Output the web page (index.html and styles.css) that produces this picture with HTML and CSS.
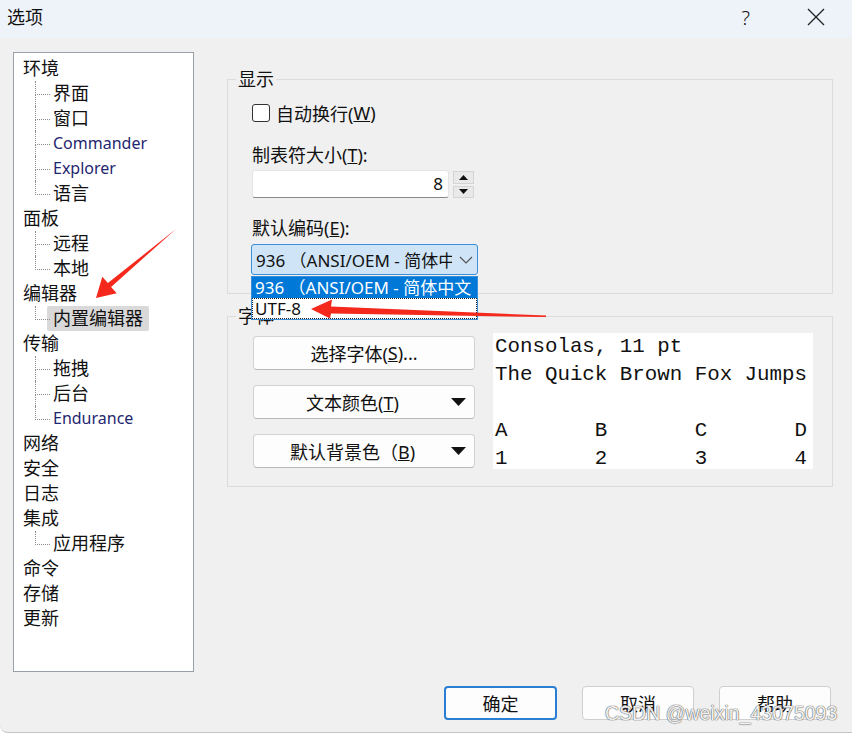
FILE: index.html
```html
<!DOCTYPE html>
<html>
<head>
  <meta charset="UTF-8">
  <title>选项</title>
  <link rel="stylesheet" href="styles.css">
</head>
<body>
<div class="window">
  <div class="titlebar">
    <span class="title">选项</span>
    <span class="help">?</span>
    <svg class="close" width="18" height="18" viewBox="0 0 18 18"><path d="M1 1L17 17M17 1L1 17" stroke="#222" stroke-width="1.3" fill="none"/></svg>
  </div>

  <div class="main">
    <div class="tree">
      <div class="node">环境</div>
      <div class="kids">
        <div class="kid">界面</div>
        <div class="kid">窗口</div>
        <div class="kid lat">Commander</div>
        <div class="kid lat">Explorer</div>
        <div class="kid">语言</div>
      </div>
      <div class="node">面板</div>
      <div class="kids">
        <div class="kid">远程</div>
        <div class="kid">本地</div>
      </div>
      <div class="node">编辑器</div>
      <div class="kids">
        <div class="kid"><span class="selected">内置编辑器</span></div>
      </div>
      <div class="node">传输</div>
      <div class="kids">
        <div class="kid">拖拽</div>
        <div class="kid">后台</div>
        <div class="kid lat">Endurance</div>
      </div>
      <div class="node">网络</div>
      <div class="node">安全</div>
      <div class="node">日志</div>
      <div class="node">集成</div>
      <div class="kids">
        <div class="kid">应用程序</div>
      </div>
      <div class="node">命令</div>
      <div class="node">存储</div>
      <div class="node">更新</div>
    </div>

    <div class="panel">
      <fieldset class="group display">
        <legend>显示</legend>
        <div class="check"><span class="box"></span>自动换行(<u>W</u>)</div>
        <div class="field-label tab-label">制表符大小(<u>T</u>):</div>
        <div class="spin">
          <div class="spin-input">8</div>
          <div class="spin-btns">
            <span class="spin-btn"><svg width="9" height="5" viewBox="0 0 9 5"><path d="M0 5L4.5 0L9 5Z" fill="#111"/></svg></span>
            <span class="spin-btn"><svg width="9" height="5" viewBox="0 0 9 5"><path d="M0 0L4.5 5L9 0Z" fill="#111"/></svg></span>
          </div>
        </div>
        <div class="field-label enc-label">默认编码(<u>E</u>):</div>
        <div class="combo-wrap">
          <div class="combo">
            <span class="combo-text">936 （ANSI/OEM - 简体中文）</span>
            <svg class="chev" width="14" height="8" viewBox="0 0 14 8"><path d="M1 1L7 7L13 1" stroke="#555" stroke-width="1.2" fill="none"/></svg>
          </div>
          <div class="combo-list">
            <div class="opt sel">936 （ANSI/OEM - 简体中文</div>
            <div class="opt focus">UTF-8</div>
          </div>
        </div>
      </fieldset>

      <fieldset class="group font">
        <legend>字体</legend>
        <div class="font-row">
          <div class="font-btns">
            <div class="btn">选择字体(<u>S</u>)...</div>
            <div class="btn drop"><span class="btn-label">文本颜色(<u>T</u>)</span><svg width="15" height="8" viewBox="0 0 15 8"><path d="M0 0L7.5 8L15 0Z" fill="#111"/></svg></div>
            <div class="btn drop"><span class="btn-label">默认背景色（<u>B</u>)</span><svg width="15" height="8" viewBox="0 0 15 8"><path d="M0 0L7.5 8L15 0Z" fill="#111"/></svg></div>
          </div>
<pre class="preview">Consolas, 11 pt
The Quick Brown Fox Jumps

A       B       C       D
1       2       3       4</pre>
        </div>
      </fieldset>
    </div>
  </div>

  <div class="footer">
    <div class="dlg-btn default">确定</div>
    <div class="dlg-btn">取消</div>
    <div class="dlg-btn">帮助</div>
  </div>

  <div class="watermark">CSDN @weixin_43075093</div>

  <svg class="arrows" width="852" height="734" viewBox="0 0 852 734">
    <path d="M176 229 L111.1 286.9 L116.7 293.3 L96 298 L102.3 276.7 L107.9 283.1 Z" fill="#f5281c"/>
    <path d="M546 315.5 L546 317 L331 313.5 L330 318.5 L311 309 L332 299.5 L331 306.5 Z" fill="#f5281c"/>
  </svg>
</div>
</body>
</html>
```

FILE: styles.css
```css
html, body {
  margin: 0;
  background: #fff;
}

.window {
  position: relative;
  width: 852px;
  height: 732px;
  background: #f0f0f0;
  border-bottom: 1px solid #c4c4c4;
  border-bottom-left-radius: 8px;
  font-family: "Noto Sans", "Noto Sans CJK SC", sans-serif;
  font-size: 18px;
  color: #111;
  overflow: hidden;
}

.titlebar {
  height: 38px;
  background: #eef3fa;
  display: flex;
  align-items: center;
  padding: 0 0 0 7px;
}
.title {
  flex: 1;
  line-height: 24px;
  margin-top: -4px;
}
.help {
  font-size: 20px;
  font-weight: 300;
  margin-right: 57px;
  margin-top: -4px;
}
.close {
  margin-right: 27px;
  margin-top: -4px;
}

.main {
  display: flex;
  padding: 14px 0 0 13px;
  gap: 33px;
}

/* left tree */
.tree {
  width: 170px;
  height: 615px;
  background: #fff;
  border: 1px solid #9aa0a8;
  padding: 3px 0 0 9px;
  line-height: 25px;
}
.node {
  height: 25px;
}
.kids {
  margin-left: 12px;
}
.kid {
  position: relative;
  height: 25px;
  padding-left: 18px;
}
.kid::before {
  content: '';
  position: absolute;
  left: 0;
  top: 0;
  width: 14px;
  height: 13px;
  border-left: 1px dotted #8c8c8c;
  border-bottom: 1px dotted #8c8c8c;
}
.kid:not(:last-child)::after {
  content: '';
  position: absolute;
  left: 0;
  top: 13px;
  bottom: 0;
  border-left: 1px dotted #8c8c8c;
}
.kid.lat {
  font-size: 16px;
  color: #1f2670;
}
.selected {
  background: #d9d9d9;
  margin-left: -6px;
  padding: 0 6px;
  display: inline-block;
  border-radius: 2px;
}

/* right side */
.panel {
  width: 606px;
  margin-top: 17px;
}
.group {
  margin: 0;
  padding: 0 0 0 24px;
  border: 1px solid #dcdcdc;
  min-width: 0;
}
.group legend {
  margin-left: -16px;
  padding: 0 2px;
  line-height: 20px;
}
.display {
  padding-bottom: 18px;
}
.check {
  display: flex;
  align-items: center;
  height: 24px;
  margin-top: 12px;
}
.box {
  width: 16px;
  height: 16px;
  border: 1px solid #333;
  border-radius: 3px;
  background: #fff;
  margin-right: 6px;
}
.field-label {
  line-height: 24px;
  height: 24px;
}
.tab-label {
  margin-top: 18px;
}
.spin {
  display: flex;
  margin-top: 3px;
  height: 28px;
  gap: 4px;
}
.spin-input {
  width: 190px;
  height: 26px;
  background: #fff;
  border: 1px solid #e4e4e4;
  border-bottom: 1px solid #8a8a8a;
  border-radius: 3px;
  text-align: right;
  padding-right: 5px;
  line-height: 26px;
  font-size: 17px;
}
.spin-btns {
  display: flex;
  flex-direction: column;
  gap: 2px;
  padding-top: 1px;
}
.spin-btn {
  width: 19px;
  height: 11px;
  background: #e9e9e9;
  border: 1px solid #d4d4d4;
  display: flex;
  align-items: center;
  justify-content: center;
}
.enc-label {
  margin-top: 18px;
}
.combo-wrap {
  position: relative;
  width: 227px;
  margin-top: 4px;
  margin-left: -1px;
}
.combo {
  height: 29px;
  border: 1px solid #3b8ed8;
  border-radius: 3px;
  background: #cfe4f7;
  display: flex;
  align-items: center;
  padding-left: 4px;
  overflow: hidden;
}
.combo-text {
  width: 196px;
  white-space: nowrap;
  overflow: hidden;
  font-size: 17px;
}
.chev {
  margin-left: 7px;
}
.combo-list {
  position: absolute;
  left: 0;
  top: 32px;
  width: 225px;
  background: #fff;
  border: 1px solid #3b8ed8;
  z-index: 2;
}
.opt {
  height: 21px;
  line-height: 21px;
  padding-left: 3px;
  font-size: 17px;
  white-space: nowrap;
  overflow: hidden;
}
.opt.sel {
  background: #0078d7;
  color: #fff;
}
.opt.focus {
  height: 19px;
  line-height: 19px;
  border: 1px dotted #222;
  padding-left: 2px;
}

.font {
  margin-top: 12px;
  padding-bottom: 17px;
}
.font-row {
  display: flex;
  align-items: flex-start;
  gap: 18px;
  margin-left: 1px;
}
.font-btns {
  display: flex;
  flex-direction: column;
  gap: 15px;
  margin-top: 10px;
}
.btn {
  width: 220px;
  height: 32px;
  background: #fdfdfd;
  border: 1px solid #d2d2d2;
  border-bottom-color: #b8b8b8;
  border-radius: 4px;
  display: flex;
  align-items: center;
  justify-content: center;
}
.btn.drop {
  justify-content: space-between;
  padding-right: 8px;
  width: 212px;
}
.btn-label {
  flex: 1;
  text-align: center;
}
.preview {
  margin: 7px 0 0;
  width: 316px;
  height: 136px;
  padding: 0 2px;
  background: #fff;
  font-family: "Liberation Mono", "DejaVu Sans Mono", monospace;
  font-size: 20.8px;
  line-height: 28px;
  color: #111;
  overflow: hidden;
}

/* footer buttons */
.footer {
  display: flex;
  justify-content: flex-end;
  gap: 25px;
  padding: 14px 21px 0 0;
}
.dlg-btn {
  width: 110px;
  height: 32px;
  background: #fdfdfd;
  border: 1px solid #cfcfcf;
  border-radius: 4px;
  display: flex;
  align-items: center;
  justify-content: center;
}
.dlg-btn.default {
  border: 2px solid #2a7fd4;
  width: 109px;
  height: 30px;
}

.watermark {
  position: absolute;
  left: 605px;
  top: 702px;
  font-family: "Liberation Sans", sans-serif;
  font-size: 19.5px;
  color: rgba(255, 255, 255, 0.92);
  text-shadow: 0 0 1px #666, 0 0 1px #666, 0 0 1px #888;
}

.arrows {
  position: absolute;
  left: 0;
  top: 0;
  z-index: 5;
  pointer-events: none;
}
```
